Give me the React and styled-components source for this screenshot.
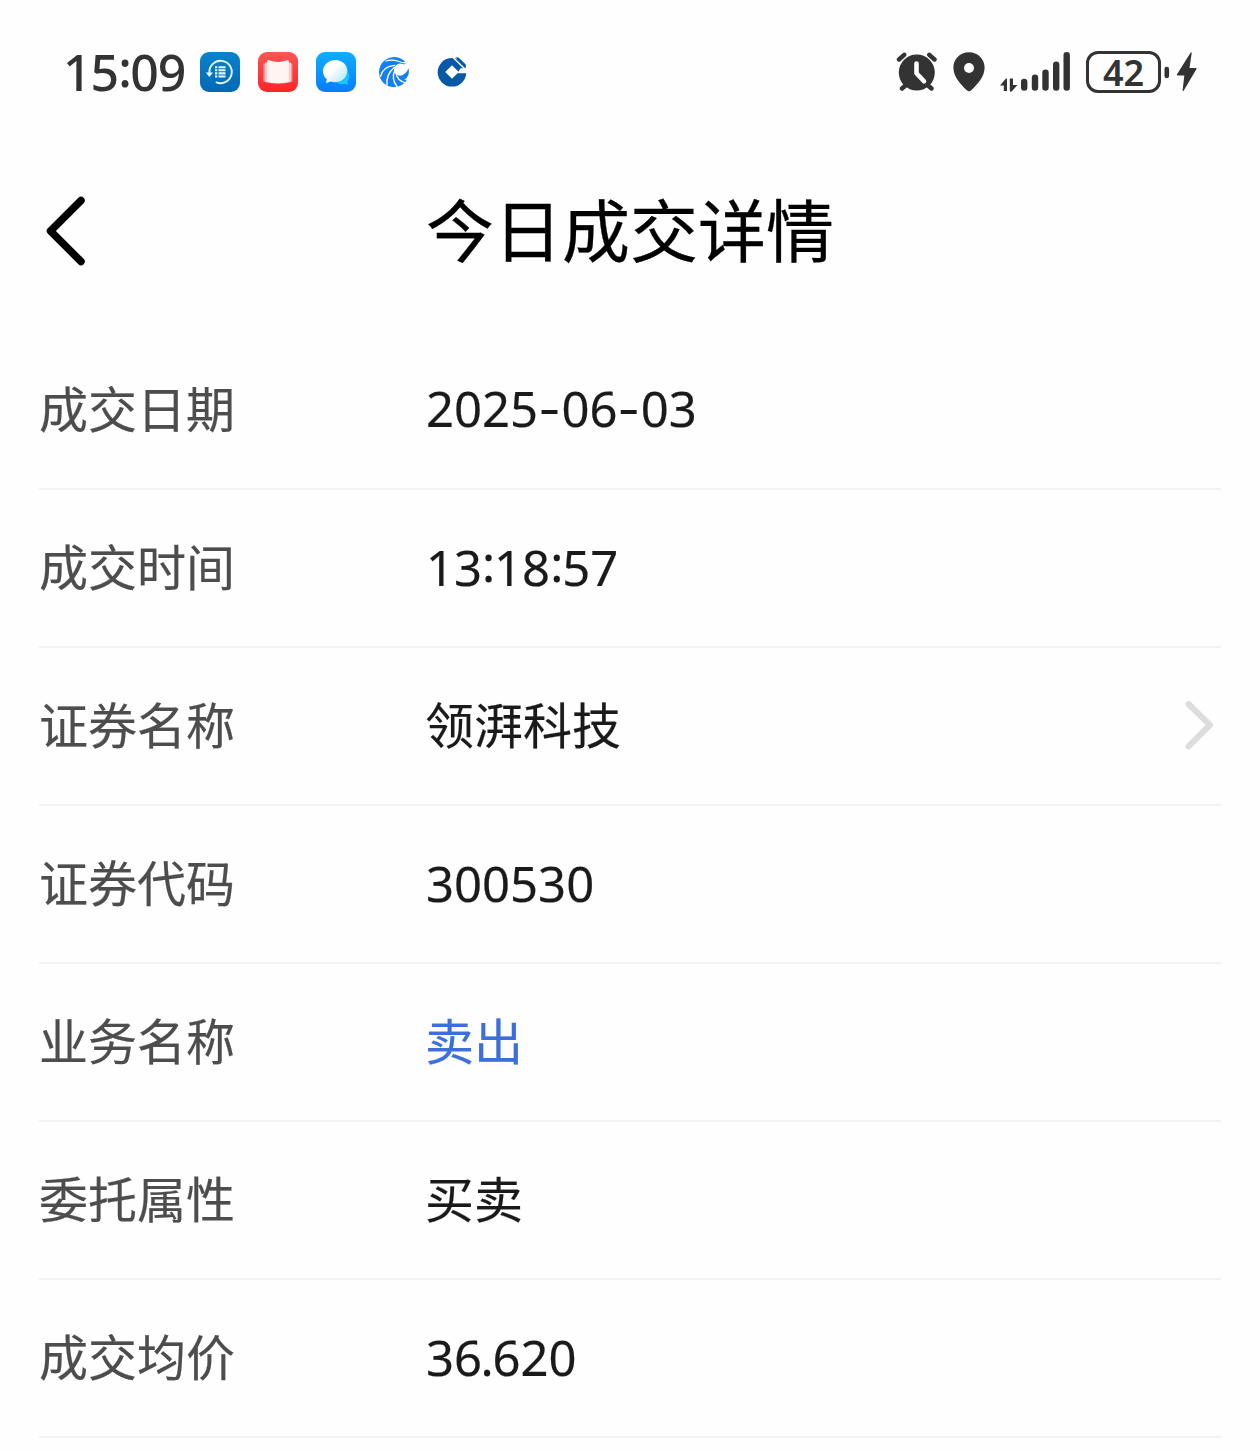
import React from 'react';
import styled, { createGlobalStyle } from 'styled-components';

const GlobalStyle = createGlobalStyle`
  * { box-sizing: border-box; }
  body {
    margin: 0;
    background: #fefefe;
    font-family: "Noto Sans", "Noto Sans CJK SC", sans-serif;
  }
  svg { display: block; flex: none; }
`;

const Screen = styled.main`
  width: 1260px;
  height: 1450px;
  overflow: hidden;
  background: #fefefe;
`;

const StatusBar = styled.header`
  display: flex;
  justify-content: space-between;
  height: 144px;
  padding: 0 63px 0 63px;
`;

const StatusGroup = styled.div`
  display: flex;
  align-items: center;
`;

const Clock = styled.time`
  width: 137px;
  font-size: 50px;
  font-weight: 500;
  line-height: 60px;
  letter-spacing: -1px;
  white-space: nowrap;
  color: #333;
`;

const AppIcons = styled.div`
  display: flex;
  gap: 18px;
`;

const StatusIcons = styled.div`
  display: flex;
  align-items: center;
  gap: 15px;
`;

const Battery = styled.div`
  display: flex;
  align-items: center;
  justify-content: center;
  width: 75px;
  height: 42px;
  margin-left: 14px;
  padding-top: 2px;
  border: 3px solid #333;
  border-radius: 12px;
  color: #333;
  font-size: 36px;
  font-weight: 600;
  line-height: 36px;
`;

const NavBar = styled.div`
  display: grid;
  grid-template-columns: 200px 1fr 200px;
  align-items: center;
  height: 188px;
  padding-bottom: 13px;
`;

const BackButton = styled.button`
  justify-self: start;
  padding: 0 0 1px 44px;
  border: 0;
  background: none;
`;

const Title = styled.h1`
  margin: 0;
  padding-bottom: 8px;
  text-align: center;
  font-family: "Noto Sans CJK SC", sans-serif;
  font-size: 68px;
  font-weight: 400;
  line-height: 90px;
  color: #000;
  -webkit-text-stroke: 0.3px currentColor;
`;

const DetailList = styled.dl`
  margin: 0;
  padding: 0 39px;
`;

const Row = styled.div`
  display: flex;
  align-items: center;
  height: 158px;
  border-bottom: 2px solid #f2f2f2;
  font-size: 49px;
  line-height: 70px;
`;

const Label = styled.dt`
  width: 387px;
  padding-bottom: 6px;
  font-family: "Noto Sans CJK SC", sans-serif;
  color: #4d4d4d;
  -webkit-text-stroke: 0.2px currentColor;
`;

const Value = styled.dd`
  flex: 1;
  margin: 0 0 0 ${(p) => (p.$numeric ? 0 : -1)}px;
  padding-bottom: 2px;
  white-space: nowrap;
  color: ${(p) => p.$color || '#1a1a1a'};
  -webkit-text-stroke: 0.2px currentColor;
`;

const Dash = styled.span`
  font-family: Inter, sans-serif;
  letter-spacing: 0.7px;
`;

const Colon = styled.span`
  display: inline-block;
  width: 12px;
  text-align: center;
  transform: translateY(-4px);
`;

const Point = styled.span`
  display: inline-block;
  width: 10.5px;
  text-indent: -1.5px;
`;

const Chevron = styled.svg`
  margin-bottom: 3px;
`;

const ink = '#333';

function BackupIcon() {
  return (
    <svg width="40" height="40" viewBox="0 0 40 40">
      <defs>
        <linearGradient id="backup" x1="0" y1="0" x2="0" y2="1">
          <stop offset="0" stopColor="#0a84cc" />
          <stop offset="1" stopColor="#0368b5" />
        </linearGradient>
      </defs>
      <rect width="40" height="40" rx="9" fill="url(#backup)" />
      <path d="M9.400 20.500A11.200 11.200 0 1 1 16.500 30.400" fill="none" stroke="#e4f8ff" strokeWidth="1.900" strokeLinecap="round" />
      <path d="M5.800 20.500h7.200l-3.600 4.400z" fill="#e4f8ff" />
      <path d="M15 15.200h2.300M18.500 15.200h7M15 18.300h2.300M18.500 18.300h7M15 21.400h2.300M18.500 21.400h7M15 24.500h2.300M18.500 24.500h7" stroke="#e4f8ff" strokeWidth="2.100" />
    </svg>
  );
}

function ReaderIcon() {
  return (
    <svg width="40" height="40" viewBox="0 0 40 40">
      <defs>
        <linearGradient id="reader" x1="0" y1="0" x2="0" y2="1">
          <stop offset="0" stopColor="#fd5555" />
          <stop offset="1" stopColor="#fc2429" />
        </linearGradient>
      </defs>
      <rect width="40" height="40" rx="9" fill="url(#reader)" />
      <path d="M5.400 11.500h29v18q-14.500 3-29 0z" fill="#ff9694" />
      <path d="M7 10.500h26v19.500q-13 3-26 0z" fill="#ffc9c8" />
      <path d="M9.200 9.500q0-2 1.800-1.300 9 3.600 18 0 1.800-.7 1.800 1.300v20q-10.800 3.600-21.600 0z" fill="#fff4f2" />
    </svg>
  );
}

function MessageIcon() {
  return (
    <svg width="40" height="40" viewBox="0 0 40 40">
      <defs>
        <linearGradient id="message" x1="0" y1="0" x2="0" y2="1">
          <stop offset="0" stopColor="#0faeff" />
          <stop offset="1" stopColor="#087dff" />
        </linearGradient>
        <linearGradient id="bubble" x1="0" y1="0" x2="1" y2="1">
          <stop offset=".4" stopColor="#fff" />
          <stop offset="1" stopColor="#a9e2ff" />
        </linearGradient>
      </defs>
      <rect width="40" height="40" rx="9" fill="url(#message)" />
      <path d="M19.300 8C12.300 8 7 13 7 19.200c0 3.300 1.500 6 3.800 8.100l-.8 4 4.600-1.800c1.400.5 3 .8 4.700.8 7 0 12.200-5 12.200-11.100S26.300 8 19.300 8z" fill="url(#bubble)" />
      <path d="M31 18.700a7.500 7.500 0 0 1 .3 10.500l.9 3.600-3.900-1q-4.500 1.600-7.500-1.600C27 29.500 31.500 25 31 18.700z" fill="#14c8f8" />
    </svg>
  );
}

function SwirlIcon() {
  return (
    <svg width="40" height="40" viewBox="0 0 40 40">
      <path d="M32.300 11.500A15 15 0 1 0 28.500 32.500Q31.500 30.500 33 27.500 31.700 28 30 27.700 33.500 26 34.500 22.500 35.300 19 34.500 16.500 33.200 20.300 29.500 22.600A6 6 0 1 1 29 12.300Q31 12.500 32.300 11.500z" fill="#147ff3" />
      <g fill="none" stroke="#fefefe" strokeLinecap="round">
        <path d="M12 9Q18 7 25 9.500 29.500 11.300 33 10.500" strokeWidth="1.300" />
        <path d="M6.500 24.500Q9 14 21 13.300" strokeWidth="1.200" />
        <path d="M13 33Q12 22 20.300 15.500" strokeWidth="1.400" />
        <path d="M23 34.500Q17.300 27 20.500 19" strokeWidth="1.400" />
        <path d="M30.500 30.500Q23.500 28.500 22 21.500" strokeWidth="1.200" />
      </g>
    </svg>
  );
}

function BankIcon() {
  return (
    <svg width="40" height="40" viewBox="0 0 40 40">
      <circle cx="20" cy="20.300" r="14.300" fill="#0758a6" />
      <path d="M20 13.200 26.800 20 20 26.800 13.200 20z" fill="#fefefe" />
      <path d="M28.500 16.200H36v5H25.500z" fill="#fefefe" />
      <path d="M20.300 4.700 33.500 17.400" stroke="#fefefe" strokeWidth="1.400" />
      <path d="M23.500 5.200 26.500 5.500 33.800 12.500 34 16z" fill="#0758a6" />
    </svg>
  );
}

function AlarmIcon() {
  return (
    <svg width="42" height="42" viewBox="0 0 42 42">
      <g stroke={ink} strokeWidth="4.400" strokeLinecap="round">
        <path d="m3 8.500 5.200-4.700M38.500 8.500l-5.200-4.700M10 34l-4 3.500M31.500 34l4 3.500" />
      </g>
      <circle cx="20.800" cy="21.500" r="18" fill={ink} />
      <path d="M20.500 12.500v9.800l7.500 8" fill="none" stroke="#fefefe" strokeWidth="4.600" strokeLinecap="round" strokeLinejoin="round" />
    </svg>
  );
}

function PinIcon() {
  return (
    <svg width="32" height="42" viewBox="0 0 32 42">
      <path d="M16 1.300C7.200 1.300.4 8 .4 16.500c0 9 6.600 16.100 13.200 22.600q2.400 2.400 4.800 0c6.600-6.500 13.200-13.600 13.200-22.600C31.600 8 24.800 1.300 16 1.300z" fill={ink} />
      <circle cx="16" cy="17" r="5" fill="#fefefe" />
    </svg>
  );
}

function SignalIcon() {
  return (
    <svg width="72" height="42" viewBox="0 0 72 42">
      <path d="M0 34.500 5.700 27.800q1.300-1 1.300.6V40H3.800v-5.500zM9.800 27.500h3.200V34h4.400l-5.500 6.300q-2.100 1-2.100-.6z" fill={ink} />
      <g stroke={ink} strokeWidth="6.400" strokeLinecap="round">
        <path d="M24.200 31v5.500M35 26.800v9.700M45.500 21.800v14.700M56.200 13.800v22.700M66.700 4.300v32.200" />
      </g>
    </svg>
  );
}

function ChargeIcon() {
  return (
    <svg width="36" height="42" viewBox="0 0 36 42">
      <path d="M5.800 18v7" stroke={ink} strokeWidth="4.600" strokeLinecap="round" />
      <path d="M29.700 1.500 16 23.300q-.6 1.100.5 1.100h6.800l-1.700 15.200q.2 1 1 .1L35.500 18q.5-1.100-.6-1.100H28.500L30.700 2q-.2-1-1-.5z" fill={ink} />
    </svg>
  );
}

const rows = [
  { label: '成交日期', value: <>2025<Dash>-</Dash>06<Dash>-</Dash>03</>, numeric: true },
  { label: '成交时间', value: <>13<Colon>:</Colon>18<Colon>:</Colon>57</>, numeric: true },
  { label: '证券名称', value: '领湃科技', link: true },
  { label: '证券代码', value: '300530', numeric: true },
  { label: '业务名称', value: '卖出', color: '#3c6fdc' },
  { label: '委托属性', value: '买卖' },
  { label: '成交均价', value: <>36<Point>.</Point>620</>, numeric: true },
];

export default function App() {
  return (
    <>
      <GlobalStyle />
      <Screen>
        <StatusBar>
          <StatusGroup>
            <Clock>15<Colon>:</Colon>09</Clock>
            <AppIcons>
              <BackupIcon />
              <ReaderIcon />
              <MessageIcon />
              <SwirlIcon />
              <BankIcon />
            </AppIcons>
          </StatusGroup>
          <StatusGroup>
            <StatusIcons>
              <AlarmIcon />
              <PinIcon />
              <SignalIcon />
            </StatusIcons>
            <Battery>42</Battery>
            <ChargeIcon />
          </StatusGroup>
        </StatusBar>
        <NavBar>
          <BackButton aria-label="返回">
            <svg width="44" height="72" viewBox="0 0 44 72">
              <path d="M37 5.500 6.500 36 37 66.500" fill="none" stroke="#000" strokeWidth="7.500" strokeLinecap="round" strokeLinejoin="round" />
            </svg>
          </BackButton>
          <Title>今日成交详情</Title>
        </NavBar>
        <DetailList>
          {rows.map((row) => (
            <Row key={row.label}>
              <Label>{row.label}</Label>
              <Value $color={row.color} $numeric={row.numeric}>{row.value}</Value>
              {row.link && (
                <Chevron width="38" height="52" viewBox="0 0 38 52">
                  <path d="M5.500 5 27 26 5.500 47.300" fill="none" stroke="#ddd" strokeWidth="6" strokeLinecap="round" strokeLinejoin="round" />
                </Chevron>
              )}
            </Row>
          ))}
        </DetailList>
      </Screen>
    </>
  );
}
